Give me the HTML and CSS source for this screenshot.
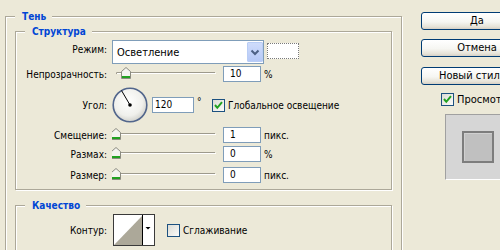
FILE: index.html
```html
<!DOCTYPE html>
<html lang="ru">
<head>
<meta charset="utf-8">
<title>Тень</title>
<link rel="stylesheet" href="styles.css">
</head>
<body>
<div class="page">
  <div class="group outer">
    <div class="gtitle">Тень</div>
    <div class="group inner struct">
      <div class="gtitle">Структура</div>

      <div class="row r-mode">
        <span class="lbl lbl-top">Режим:</span>
        <div class="select">
          <span class="sel-text">Осветление</span>
          <span class="sel-btn"><svg width="14" height="18" viewBox="0 0 14 18"><path d="M3.5 7.5 L7 11 L10.5 7.5" fill="none" stroke="#4d6185" stroke-width="2"/></svg></span>
        </div>
        <span class="swatch"></span>
      </div>

      <div class="row r-line r-opacity">
        <span class="lbl">Непрозрачность:</span>
        <svg class="slider" width="104" height="16" viewBox="0 0 104 16">
          <path d="M5 6.5 H103" stroke="#9d9a8c" stroke-width="1"/>
          <path d="M5 7.5 H104" stroke="#fff" stroke-width="1"/>
          <path d="M5 6.5 Q3 7 5 8" fill="none" stroke="#9d9a8c"/>
          <g transform="translate(9,1)">
            <path d="M0.5 4.5 L5 0.5 L9.5 4.5 V11.5 H0.5 Z" fill="#f4f4f0" stroke="#8b8b80"/>
            <rect x="1" y="9" width="8" height="2" fill="#21a121"/>
          </g>
        </svg>
        <span class="field f-num">10</span>
        <span class="unit">%</span>
      </div>

      <div class="row r-angle">
        <span class="lbl">Угол:</span>
        <svg class="dial" width="36" height="36" viewBox="0 0 36 36">
          <defs>
            <radialGradient id="dg" cx="45%" cy="40%" r="60%">
              <stop offset="0" stop-color="#ffffff"/>
              <stop offset="0.7" stop-color="#f0f0ec"/>
              <stop offset="1" stop-color="#d2d2cc"/>
            </radialGradient>
          </defs>
          <circle cx="18" cy="18" r="16.8" fill="url(#dg)" stroke="#52668c" stroke-width="1.6"/>
          <line x1="18" y1="18" x2="9.5" y2="3.5" stroke="#000" stroke-width="1"/>
          <circle cx="18" cy="18" r="1.8" fill="#000"/>
        </svg>
        <span class="field f-angle">120</span>
        <span class="deg">°</span>
        <span class="check"><svg width="11" height="11" viewBox="0 0 11 11"><path d="M2 5 L4.3 7.8 L9 2.2" fill="none" stroke="#21a121" stroke-width="2"/></svg></span>
        <span class="clabel">Глобальное освещение</span>
      </div>

      <div class="row r-line r-offset">
        <span class="lbl">Смещение:</span>
        <svg class="slider" width="104" height="16" viewBox="0 0 104 16">
          <path d="M5 6.5 H103" stroke="#9d9a8c" stroke-width="1"/>
          <path d="M5 7.5 H104" stroke="#fff" stroke-width="1"/>
          <path d="M5 6.5 Q3 7 5 8" fill="none" stroke="#9d9a8c"/>
          <g transform="translate(-1,1)">
            <path d="M0.5 4.5 L5 0.5 L9.5 4.5 V11.5 H0.5 Z" fill="#f4f4f0" stroke="#8b8b80"/>
            <rect x="1" y="9" width="8" height="2" fill="#21a121"/>
          </g>
        </svg>
        <span class="field f-num">1</span>
        <span class="unit">пикс.</span>
      </div>

      <div class="row r-line r-spread">
        <span class="lbl">Размах:</span>
        <svg class="slider" width="104" height="16" viewBox="0 0 104 16">
          <path d="M5 6.5 H103" stroke="#9d9a8c" stroke-width="1"/>
          <path d="M5 7.5 H104" stroke="#fff" stroke-width="1"/>
          <path d="M5 6.5 Q3 7 5 8" fill="none" stroke="#9d9a8c"/>
          <g transform="translate(-1,1)">
            <path d="M0.5 4.5 L5 0.5 L9.5 4.5 V11.5 H0.5 Z" fill="#f4f4f0" stroke="#8b8b80"/>
            <rect x="1" y="9" width="8" height="2" fill="#21a121"/>
          </g>
        </svg>
        <span class="field f-num">0</span>
        <span class="unit">%</span>
      </div>

      <div class="row r-line r-size">
        <span class="lbl">Размер:</span>
        <svg class="slider" width="104" height="16" viewBox="0 0 104 16">
          <path d="M5 6.5 H103" stroke="#9d9a8c" stroke-width="1"/>
          <path d="M5 7.5 H104" stroke="#fff" stroke-width="1"/>
          <path d="M5 6.5 Q3 7 5 8" fill="none" stroke="#9d9a8c"/>
          <g transform="translate(-1,1)">
            <path d="M0.5 4.5 L5 0.5 L9.5 4.5 V11.5 H0.5 Z" fill="#f4f4f0" stroke="#8b8b80"/>
            <rect x="1" y="9" width="8" height="2" fill="#21a121"/>
          </g>
        </svg>
        <span class="field f-num">0</span>
        <span class="unit">пикс.</span>
      </div>
    </div>

    <div class="group inner quality">
      <div class="gtitle">Качество</div>
      <div class="row r-contour">
        <span class="lbl">Контур:</span>
        <svg class="contour" width="42" height="32" viewBox="0 0 42 32">
          <rect x="0.5" y="0.5" width="41" height="31" fill="#fff" stroke="#3a3a3a"/>
          <polygon points="1,31 29,2 29,31" fill="#aca899"/>
          <line x1="29.5" y1="1" x2="29.5" y2="31" stroke="#000"/>
          <polygon points="32.5,13 37.5,13 35,15.5" fill="#000"/>
        </svg>
        <span class="check check-off"></span>
        <span class="clabel">Сглаживание</span>
      </div>
    </div>
  </div>

  <div class="side">
    <div class="btn">Да</div>
    <div class="btn btn-2">Отмена</div>
    <div class="btn btn-3">Новый стиль...</div>
    <div class="preview-row">
      <span class="check"><svg width="11" height="11" viewBox="0 0 11 11"><path d="M2 5 L4.3 7.8 L9 2.2" fill="none" stroke="#21a121" stroke-width="2"/></svg></span>
      <span class="clabel">Просмотр</span>
    </div>
    <div class="preview"><div class="preview-square"></div></div>
  </div>
</div>
</body>
</html>
```

FILE: styles.css
```css
html, body {
  margin: 0;
  padding: 0;
}
body {
  width: 500px;
  height: 250px;
  overflow: hidden;
  background: #ece9d8;
  font-family: "DejaVu Sans", sans-serif;
  font-stretch: condensed;
  font-size: 10px;
  line-height: 13px;
  color: #000;
}
.page {
  display: flex;
  align-items: flex-start;
  padding-top: 10px;
  width: 700px;
}
.group {
  box-sizing: border-box;
  border: 1px solid #aca899;
  box-shadow: inset 1px 1px 0 #fff, 1px 1px 0 #fff;
}
.gtitle {
  width: max-content;
  margin: -7px 0 0 9px;
  padding: 0 6px 0 7px;
  background: #ece9d8;
  color: #0046d5;
  font-weight: bold;
  line-height: 13px;
}
.outer {
  flex: none;
  margin: 6px 0 0 5px;
  width: 397px;
  height: 260px;
}
.inner {
  margin-left: 9px;
  width: 377px;
}
.struct {
  margin-top: 8px;
  height: 159px;
}
.quality {
  margin-top: 15px;
  height: 60px;
}
.row {
  display: flex;
  align-items: center;
}
.lbl {
  flex: none;
  width: 91px;
  margin-right: 5px;
  text-align: right;
}
.lbl-top {
  align-self: flex-start;
  padding-top: 3px;
}
.r-mode {
  margin-top: 2px;
  height: 24px;
  align-items: flex-start;
}
.select {
  box-sizing: border-box;
  width: 152px;
  height: 24px;
  border: 1px solid #7f9db9;
  background: #fff;
  display: flex;
  align-items: center;
  padding: 0 0 0 4px;
  font-size: 11px;
}
.sel-text {
  flex: 1;
}
.sel-btn {
  box-sizing: border-box;
  width: 16px;
  height: 20px;
  border: 1px solid #b9cdf5;
  border-radius: 1px;
  background: linear-gradient(#cfdcfb, #b6c9f7);
  display: flex;
  align-items: center;
  justify-content: center;
}
.swatch {
  box-sizing: border-box;
  width: 32px;
  height: 16px;
  margin: 3px 0 0 3px;
  border: 1px dotted #7a7a7a;
  background: #fff;
}
.r-line {
  height: 16px;
}
.r-opacity { margin-top: 2px; }
.r-offset { margin-top: 4px; }
.r-spread { margin-top: 3px; }
.r-size { margin-top: 5px; }
.slider {
  flex: none;
  margin-right: 7px;
}
.field {
  box-sizing: border-box;
  height: 16px;
  border: 1px solid #7f9db9;
  background: #fff;
  line-height: 14px;
}
.f-num {
  width: 38px;
  padding-left: 6px;
}
.unit {
  margin-left: 3px;
}
.r-angle {
  margin-top: 5px;
  height: 36px;
}
.dial {
  flex: none;
  margin-right: 4px;
}
.f-angle {
  width: 42px;
  padding-left: 2px;
}
.deg {
  box-sizing: border-box;
  width: 15px;
  padding-left: 3px;
  align-self: flex-start;
  margin-top: 8px;
}
.check {
  box-sizing: border-box;
  flex: none;
  width: 13px;
  height: 13px;
  margin-left: 3px;
  border: 1px solid #1c5180;
  background: linear-gradient(135deg, #dcdcd5, #fbfbf9);
  display: flex;
  align-items: center;
  justify-content: center;
}
.clabel {
  margin-left: 3px;
}
.r-contour {
  margin-top: 2px;
  height: 32px;
}
.contour {
  flex: none;
  margin-left: 1px;
}
.check-off {
  margin-left: 12px;
}
.side {
  flex: none;
  width: 112px;
  margin: 2px 0 0 19px;
  display: flex;
  flex-direction: column;
}
.btn {
  box-sizing: border-box;
  height: 18px;
  border: 1px solid #003c74;
  border-radius: 3px;
  background: linear-gradient(#ffffff, #f6f6f2 55%, #e6e3d8 85%, #d6d0c5);
  text-align: center;
  line-height: 16px;
  font-size: 11px;
}
.btn-2 { margin-top: 9px; }
.btn-3 { margin-top: 10px; }
.preview-row {
  display: flex;
  align-items: center;
  margin-top: 8px;
  margin-left: 17px;
  font-size: 11px;
}
.preview-row .clabel {
  margin-left: 3px;
}
.preview {
  box-sizing: border-box;
  width: 66px;
  height: 66px;
  margin: 8px 0 0 24px;
  background: #d6d6d6;
  border-top: 1px solid #a0a0a0;
  border-left: 1px solid #a0a0a0;
  border-bottom: 1px solid #fff;
  border-right: 1px solid #fff;
  display: flex;
  align-items: center;
  justify-content: center;
}
.preview-square {
  box-sizing: border-box;
  width: 32px;
  height: 32px;
  border: 2px solid #7d7d7d;
  background: #c0c0c0;
  box-shadow: inset 1px 1px 0 #d0d0d0;
}
```
